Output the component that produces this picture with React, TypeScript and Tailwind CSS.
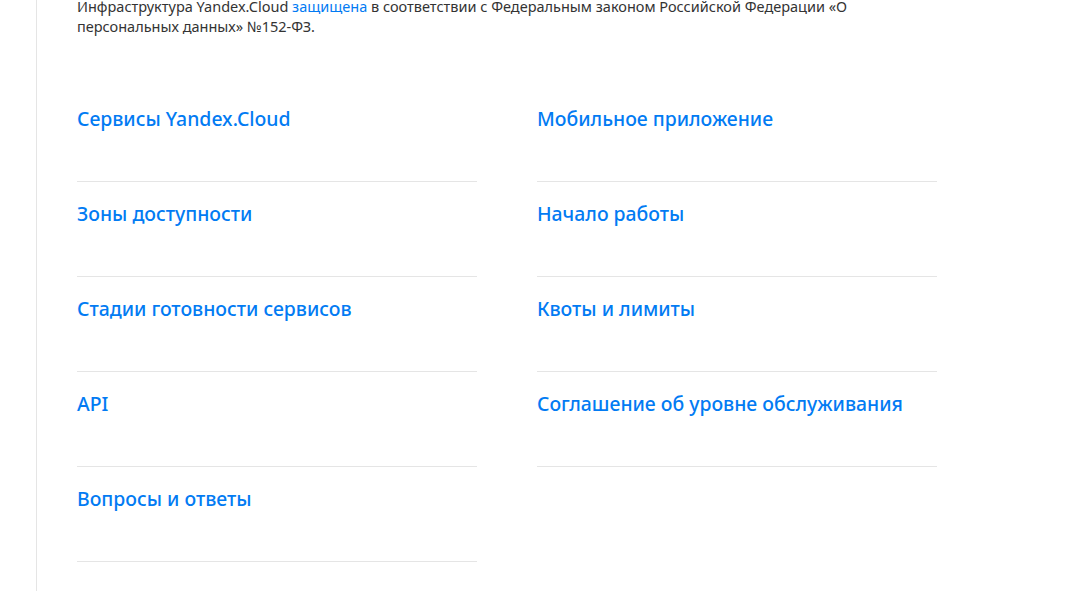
const left = [
  'Сервисы Yandex.Cloud',
  'Зоны доступности',
  'Стадии готовности сервисов',
  'API',
  'Вопросы и ответы',
];

const right = [
  'Мобильное приложение',
  'Начало работы',
  'Квоты и лимиты',
  'Соглашение об уровне обслуживания',
];

function LinkRow({ title }: { title: string }) {
  return (
    <div className="border-b border-[#e5e5e5] pt-5 pb-[50px]">
      <a
        href="#"
        className="block text-[19.4px] leading-[24px] font-medium text-[#027bf3] [font-family:'Noto_Sans',sans-serif]"
      >
        {title}
      </a>
    </div>
  );
}

export default function App() {
  return (
    <div className="min-h-[591px] w-[1084px] bg-white overflow-hidden">
      <div className="ml-9 flow-root min-h-[591px] border-l border-[#e5e5e5] pl-10">
        <p className="mt-[-4px] w-[800px] text-[14.5px] leading-5 text-[#333] [font-family:'Noto_Sans',sans-serif]">
          Инфраструктура Yandex.Cloud{' '}
          <a href="#" className="text-[#027bf3]">
            защищена
          </a>{' '}
          в соответствии с Федеральным законом Российской Федерации «О персональных данных» №152-ФЗ.
        </p>

        <div className="mt-[51px] grid w-[860px] grid-cols-2 gap-x-[60px]">
          <div>
            {left.map((t) => (
              <LinkRow key={t} title={t} />
            ))}
          </div>
          <div>
            {right.map((t) => (
              <LinkRow key={t} title={t} />
            ))}
          </div>
        </div>
      </div>
    </div>
  );
}
